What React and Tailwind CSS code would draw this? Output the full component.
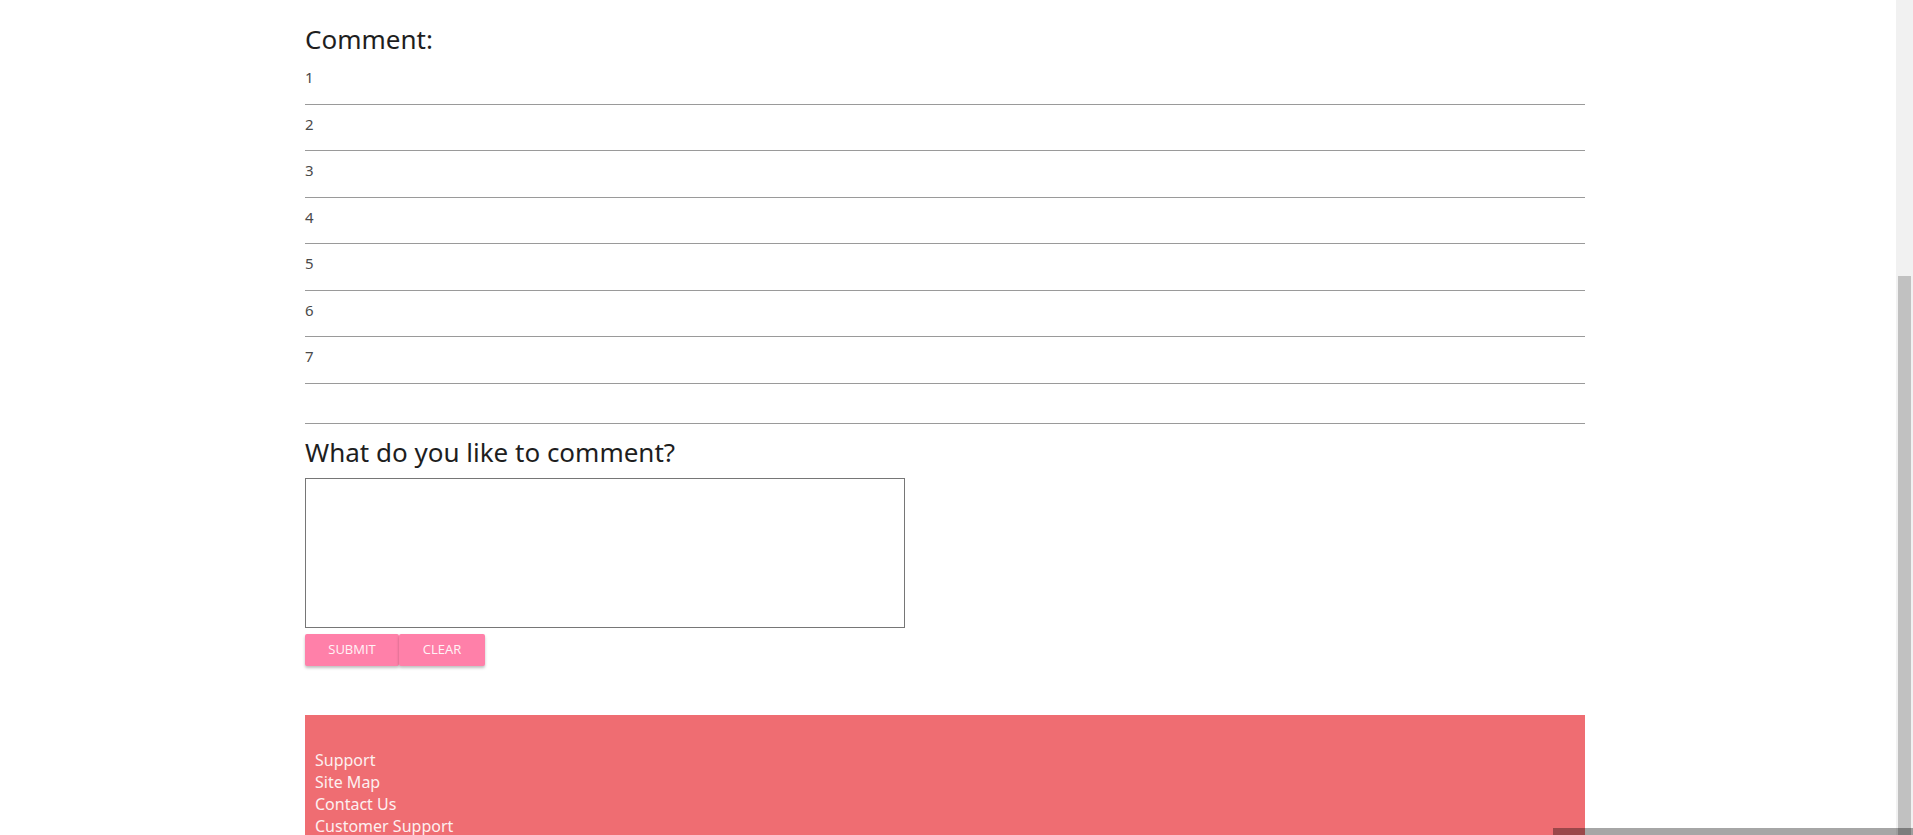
import React, { useState } from "react";

const rows = ["1", "2", "3", "4", "5", "6", "7"];
const footerLinks = ["Support", "Site Map", "Contact Us", "Customer Support"];

const CommentRow = ({ label }) => (
  <div className="h-[46.5px] border-b border-[#9a9a9a] pt-[8px] text-[15px] leading-[22px] text-[#4a4a4a]">
    {label}
  </div>
);

export default function App() {
  const [comment, setComment] = useState("");

  return (
    <div
      className="relative flex h-[835px] overflow-hidden bg-white"
      style={{ fontFamily: '"Noto Sans", "Open Sans", sans-serif' }}
    >
      <main className="flex-1">
        <div className="ml-[305px] w-[1280px]">
          <h2 className="mt-[22px] text-[26px] leading-[34px] font-normal text-[#1e1e1e]">
            Comment:
          </h2>

          <div className="mt-[2px]">
            {rows.map((r) => (
              <CommentRow key={r} label={r} />
            ))}
            <div className="h-[40px] border-b border-[#9a9a9a]"></div>
          </div>

          <h2 className="mt-[10px] text-[26px] leading-[36px] font-normal text-[#1e1e1e]">
            What do you like to comment?
          </h2>

          <textarea
            value={comment}
            onChange={(e) => setComment(e.target.value)}
            className="mt-[8px] block h-[150px] w-[600px] resize-none border border-[#767676] bg-white outline-none"
          ></textarea>

          <div className="mt-[6px] flex">
            <button
              className="h-[32px] w-[94px] rounded-[2px] bg-[#ff80a9] text-[13px] uppercase text-[#fff4f7] shadow-[0_2px_3px_rgba(0,0,0,0.25)]"
              style={{ fontFamily: '"Open Sans", sans-serif' }}
            >
              Submit
            </button>
            <button
              onClick={() => setComment("")}
              className="h-[32px] w-[86px] rounded-[2px] bg-[#ff80a9] text-[13px] uppercase text-[#fff4f7] shadow-[0_2px_3px_rgba(0,0,0,0.25)]"
              style={{ fontFamily: '"Open Sans", sans-serif' }}
            >
              Clear
            </button>
          </div>

          <footer className="mt-[49px] h-[200px] bg-[#ef6d72] pl-[10px] pt-[34px] text-[16px] leading-[22px] text-[#fdf0f0]">
            {footerLinks.map((l) => (
              <div key={l}>{l}</div>
            ))}
          </footer>
        </div>
      </main>

      {/* scrollbar */}
      <div className="flex w-[17px] flex-col bg-[#f1f1f1]">
        <div className="h-[276px]"></div>
        <div className="mx-[2px] flex-1 bg-[#c1c1c1]"></div>
      </div>

      <div className="absolute bottom-0 left-[1553px] h-[7px] w-[360px] bg-black/35"></div>
    </div>
  );
}
